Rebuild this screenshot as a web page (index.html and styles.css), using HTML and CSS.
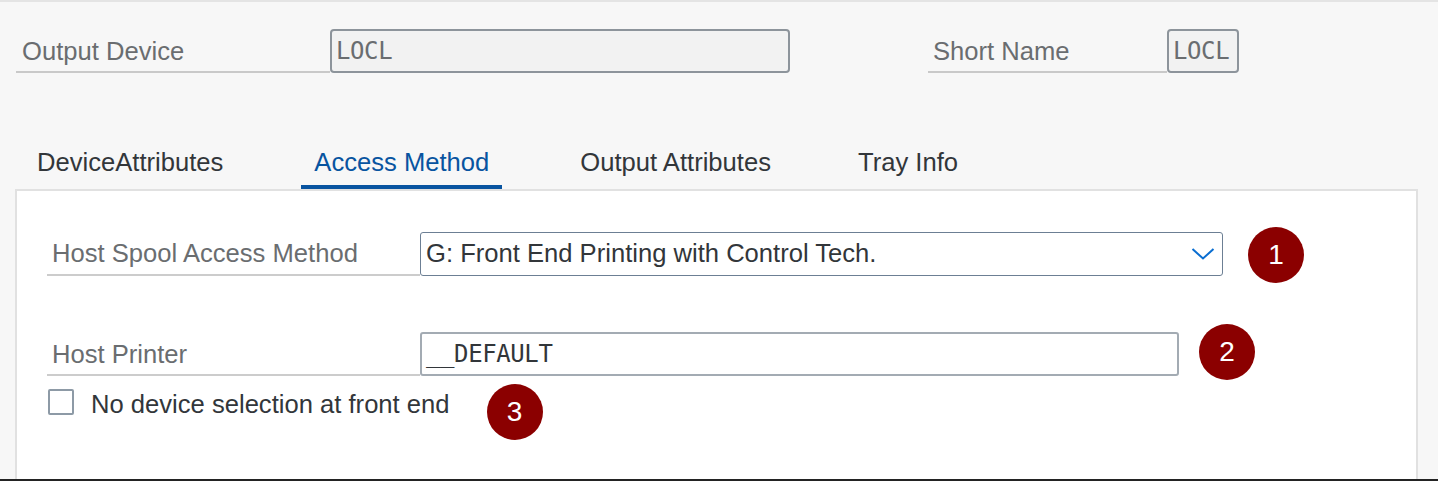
FILE: index.html
```html
<!DOCTYPE html>
<html lang="en">
<head>
<meta charset="utf-8">
<title>Output Device - Access Method</title>
<link rel="stylesheet" href="styles.css">
</head>
<body>
<div class="page">
  <div class="header">
    <div class="field field-device">
      <div class="flabel">Output Device</div>
      <div class="finput readonly mono">LOCL</div>
    </div>
    <div class="field field-short">
      <div class="flabel">Short Name</div>
      <div class="finput readonly mono">LOCL</div>
    </div>
  </div>

  <div class="tabs">
    <div class="tab">DeviceAttributes</div>
    <div class="tab active">Access Method</div>
    <div class="tab">Output Attributes</div>
    <div class="tab tab-last">Tray Info</div>
  </div>

  <div class="panel">
    <div class="row row-spool">
      <div class="plabel">Host Spool Access Method</div>
      <div class="pinput select">
        <span class="value">G: Front End Printing with Control Tech.</span>
        <svg class="chev" width="24" height="14" viewBox="0 0 24 14"><path d="M1.5 2 L12 11.5 L22.5 2" fill="none" stroke="#0a6ed1" stroke-width="2"/></svg>
      </div>
      <div class="badge badge-1">1</div>
    </div>
    <div class="row row-printer">
      <div class="plabel">Host Printer</div>
      <div class="pinput text mono">__DEFAULT</div>
      <div class="badge badge-2">2</div>
    </div>
    <div class="row row-check">
      <div class="checkbox"></div>
      <div class="clabel">No device selection at front end</div>
      <div class="badge badge-3">3</div>
    </div>
  </div>
  <div class="footer-bar"></div>
</div>
</body>
</html>
```

FILE: styles.css
```css
* { box-sizing: border-box; }
html, body { margin: 0; padding: 0; }
body {
  background: #f7f7f7;
  font-family: "Liberation Sans", Arial, sans-serif;
  font-size: 25.6px;
  color: #32363a;
}
.page {
  height: 481px;
  display: flex;
  flex-direction: column;
  border-top: 2px solid #e4e4e4;
  overflow: hidden;
}
.mono {
  font-family: "DejaVu Sans Mono", "Liberation Mono", monospace;
  font-size: 24px;
  letter-spacing: -0.4px;
}

/* header */
.header {
  display: flex;
  padding: 27px 0 0 16px;
  height: 70px;
}
.field { display: flex; align-items: stretch; height: 44px; }
.flabel {
  color: #6a6d70;
  border-bottom: 2px solid #c9c9c9;
  padding-left: 6px;
  padding-top: 3px;
  line-height: 39px;
}
.field-device .flabel { width: 314px; }
.field-device .finput { width: 460px; }
.field-short { margin-left: 138px; }
.field-short .flabel { width: 239px; padding-left: 5px; }
.field-short .finput { width: 72px; }
.finput {
  border: 2px solid #8d949b;
  border-radius: 4px;
  background: #f2f2f2;
  color: #6a6d70;
  padding-top: 2px;
  line-height: 36px;
  padding-left: 4px;
}

/* tabs */
.tabs {
  display: flex;
  gap: 65px;
  margin-top: 67px;
  padding-left: 24px;
  height: 50px;
  position: relative;
  z-index: 1;
}
.tab {
  padding: 0 13px;
  line-height: 46px;
  height: 50px;
  color: #32363a;
  border-bottom: 4px solid transparent;
  margin-bottom: -2px;
}
.tab-last { margin-left: -4px; }
.tab.active {
  color: #0854a0;
  border-bottom-color: #0854a0;
}

/* panel */
.panel {
  flex: 1;
  margin-left: 15px;
  width: 1403px;
  background: #ffffff;
  border: 2px solid #e1e1e1;
  border-bottom: none;
  padding: 33px 0 0 30px;
}
.row { display: flex; align-items: center; }
.plabel {
  width: 373px;
  height: 44px;
  color: #6a6d70;
  border-bottom: 2px solid #cccccc;
  padding-left: 5px;
  padding-top: 2px;
  display: flex;
  align-items: center;
}
.pinput {
  height: 44px;
  border-radius: 3px;
  background: #ffffff;
  display: flex;
  align-items: center;
  padding-left: 5px;
}
.pinput.select {
  width: 803px;
  border: 1.5px solid #6c7f94;
  justify-content: space-between;
  padding-right: 7px;
  color: #32363a;
}
.pinput.text {
  width: 759px;
  border: 2px solid #a3abb3;
  color: #32363a;
  padding-left: 4px;
}
.row-printer { margin-top: 45px; }
.row-check { margin-top: 8px; align-items: flex-start; }

.checkbox {
  width: 26px;
  height: 26px;
  border: 2px solid #8d9aa6;
  border-radius: 2px;
  background: #fff;
  margin-top: 1px;
  margin-left: 1px;
}
.clabel {
  margin-left: 17px;
  padding-top: 2px;
  color: #32363a;
  line-height: 28px;
}
.badge {
  width: 56px;
  height: 56px;
  border-radius: 50%;
  background: #8b0000;
  color: #ffffff;
  display: flex;
  align-items: center;
  justify-content: center;
  font-family: "Liberation Sans", Arial, sans-serif;
  font-size: 28px;
  flex: none;
}
.badge-1 { margin-left: 25px; margin-top: 3px; }
.badge-2 { margin-left: 20px; margin-top: -4px; }
.badge-3 { margin-left: 37px; margin-top: -4px; }

.footer-bar {
  height: 2px;
  background: #232323;
  flex: none;
}
```
